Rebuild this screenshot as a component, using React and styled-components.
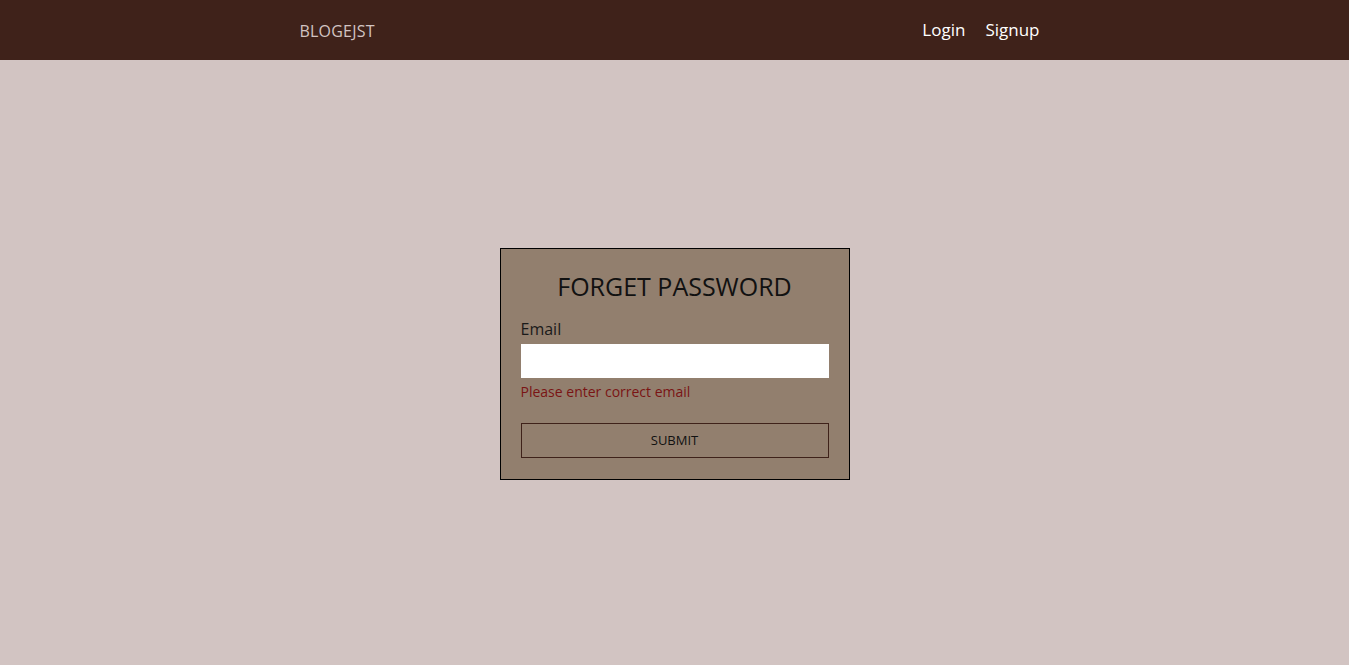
import React from 'react';
import styled, { createGlobalStyle } from 'styled-components';

const GlobalStyle = createGlobalStyle`
	* {
		box-sizing: border-box;
	}
	body {
		margin: 0;
		background-color: #d2c4c2;
		font-family: 'Open Sans', 'Noto Sans', sans-serif;
	}
`;

function App() {
	return (
		<>
			<GlobalStyle />
			<Page>
				<Header>
					<HeaderInner>
						<Logo>BLOGEJST</Logo>
						<Nav>
							<NavLink>Login</NavLink>
							<NavLink>Signup</NavLink>
						</Nav>
					</HeaderInner>
				</Header>
				<Main>
					<Card>
						<Title>FORGET PASSWORD</Title>
						<Label>Email</Label>
						<Input type="email" />
						<ErrorText>Please enter correct email</ErrorText>
						<SubmitButton>SUBMIT</SubmitButton>
					</Card>
				</Main>
			</Page>
		</>
	);
}

export default App;

const Page = styled.div`
	min-height: 100vh;
	display: flex;
	flex-direction: column;
`;

const Header = styled.header`
	height: 60px;
	background-color: #3f221a;
`;

const HeaderInner = styled.div`
	width: 750px;
	height: 100%;
	margin: 0 auto;
	display: flex;
	align-items: center;
	justify-content: space-between;
`;

const Logo = styled.div`
	color: #d2c4c2;
	font-size: 16px;
	letter-spacing: 0.2px;
	margin-top: 1px;
`;

const Nav = styled.nav`
	display: flex;
	gap: 20px;
	padding-right: 10px;
	margin-top: -2px;
`;

const NavLink = styled.a`
	color: #ffffff;
	font-size: 17px;
	cursor: pointer;
`;

const Main = styled.main`
	flex: 1;
	padding-top: 2px;
	display: flex;
	align-items: center;
	justify-content: center;
`;

const Card = styled.div`
	width: 350px;
	padding: 20px 20px 21px;
	background-color: #927f6e;
	border: 1px solid #000000;
	display: flex;
	flex-direction: column;
`;

const Title = styled.h2`
	margin: 0 0 15px;
	text-align: center;
	font-weight: 400;
	font-size: 25px;
	color: #111111;
`;

const Label = styled.label`
	font-size: 16px;
	color: #1a1a1a;
	margin-bottom: 4px;
`;

const Input = styled.input`
	height: 34px;
	border: none;
	outline: none;
	background: #ffffff;
	padding: 0 8px;
`;

const ErrorText = styled.div`
	margin-top: 5px;
	font-size: 14px;
	line-height: 18px;
	color: #7a1414;
`;

const SubmitButton = styled.button`
	margin-top: 22px;
	height: 35px;
	background: transparent;
	border: 1px solid #3f221a;
	font-family: inherit;
	font-size: 13px;
	color: #111111;
	cursor: pointer;
`;
